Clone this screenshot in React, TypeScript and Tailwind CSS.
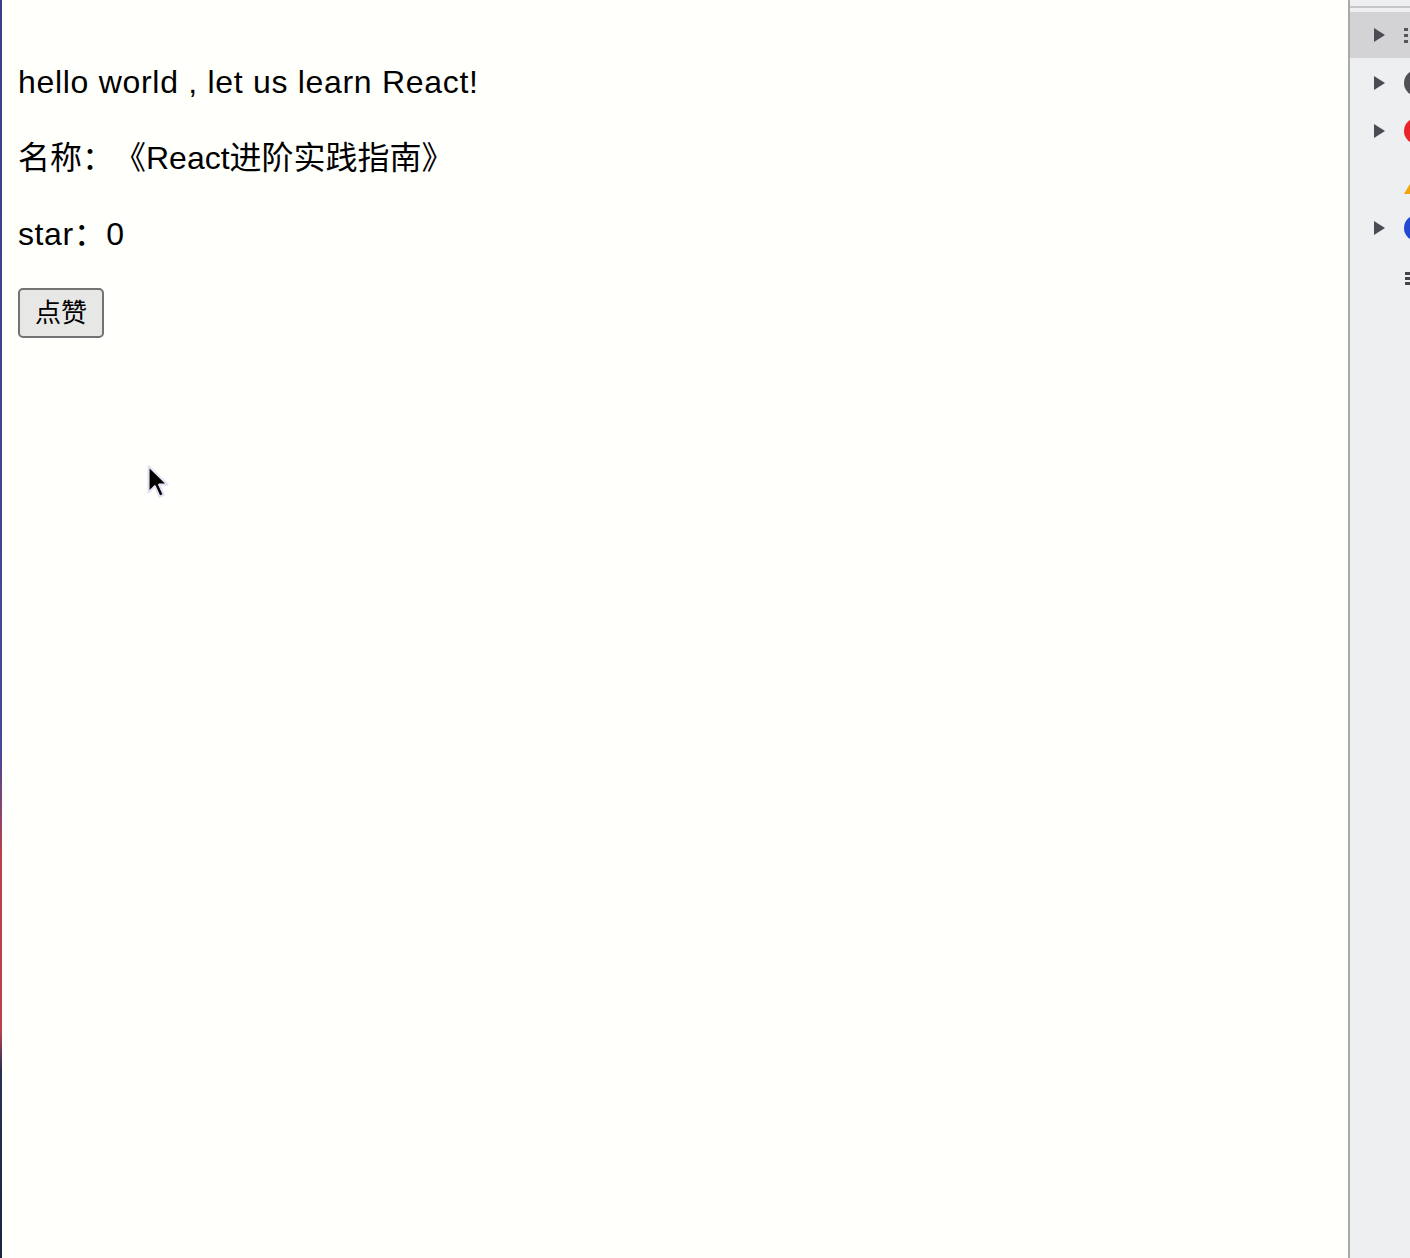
import React, { useState } from 'react';

const Triangle = () => (
  <svg width="11" height="14" viewBox="0 0 11 14" className="shrink-0">
    <path d="M0 0 L11 7 L0 14 Z" fill="#4b4b55" />
  </svg>
);

const Cursor = () => (
  <svg width="24" height="38" viewBox="0 0 22 36" className="absolute left-[144px] top-[464px]">
    <path d="M2 2 L2 27 L8 21 L12.5 31 L16.5 29.2 L12 19.5 L20 19.5 Z" fill="#000" stroke="#e4e2f4" strokeWidth="2" strokeLinejoin="round" />
  </svg>
);

const DevPanel = () => (
  <div className="w-[62px] shrink-0 bg-[#eeeff0] border-l-2 border-[#a9a9ad] overflow-hidden">
    <div className="pt-[6px] pb-[4px]">
      <div className="h-[2px] bg-[#c6c6ca]" />
    </div>
    <div className="flex flex-col">
      <div className="h-[46px] bg-[#d3d3d6] flex items-center pl-[24px] gap-[19px]">
        <Triangle />
        <div className="flex flex-col gap-[3px] shrink-0">
          <span className="w-[4px] h-[3px] bg-[#55555c]" />
          <span className="w-[4px] h-[3px] bg-[#55555c]" />
          <span className="w-[4px] h-[3px] bg-[#55555c]" />
        </div>
      </div>
      <div className="h-[50px] flex items-center pl-[24px] gap-[19px]">
        <Triangle />
        <span className="w-[26px] h-[26px] shrink-0 rounded-full bg-[#4f4f55]" />
      </div>
      <div className="h-[46px] flex items-center pl-[24px] gap-[19px]">
        <Triangle />
        <span className="w-[26px] h-[26px] shrink-0 rounded-full bg-[#e8262a]" />
      </div>
      <div className="h-[58px] flex items-center pl-[54px]">
        <svg width="26" height="22" viewBox="0 0 26 22" className="shrink-0">
          <path d="M13 0 L26 22 L0 22 Z" fill="#f3a60c" />
        </svg>
      </div>
      <div className="h-[32px] flex items-center pl-[24px] gap-[19px]">
        <Triangle />
        <span className="w-[26px] h-[26px] shrink-0 rounded-full bg-[#2448cf]" />
      </div>
      <div className="h-[68px] flex items-center pl-[55px]">
        <div className="flex flex-col gap-[2px] shrink-0">
          <span className="w-[6px] h-[3px] bg-[#45454b]" />
          <span className="w-[6px] h-[3px] bg-[#45454b]" />
          <span className="w-[6px] h-[3px] bg-[#45454b]" />
        </div>
      </div>
    </div>
  </div>
);

export default function App() {
  const [star, setStar] = useState(0);

  return (
    <div className="flex w-[1410px] h-[1258px] overflow-hidden bg-[#fffffb]">
      <div className="w-[2px] shrink-0 bg-[linear-gradient(to_bottom,#3b3f8a_0%,#4a4796_60%,#b9424a_68%,#b9424a_82%,#2a2f55_85%,#1e2340_100%)]" />
      <main
        className="relative flex-1 pl-[16px] pt-[60px] text-black [text-spacing-trim:space-all]"
        style={{ fontFamily: '"Liberation Sans", "Noto Sans CJK SC", sans-serif' }}
      >
        <p className="text-[32px] leading-[44px] tracking-[0.7px] mb-[32px]">hello world , let us learn React!</p>
        <p className="text-[32px] leading-[44px] mb-[32px]">名称：《React进阶实践指南》</p>
        <p className="text-[32px] leading-[44px] tracking-[0.6px] mb-[32px]">star：{star}</p>
        <button
          onClick={() => setStar(star + 1)}
          className="w-[86px] h-[50px] flex items-center justify-center rounded-[5px] border-2 border-[#737373] bg-[#e7e7e5] text-[26px] leading-none [text-spacing-trim:space-all]"
        >
          点赞
        </button>
        <Cursor />
      </main>
      <DevPanel />
    </div>
  );
}
